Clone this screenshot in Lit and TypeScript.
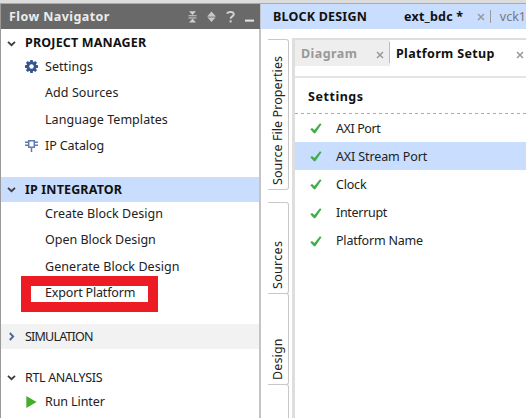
import { LitElement, html, css, svg } from "lit";
import { customElement } from "lit/decorators.js";
import { classMap } from "lit/directives/class-map.js";
import { styleMap } from "lit/directives/style-map.js";

const spaced = (label: string, ls: number) =>
  html`<span style=${styleMap({ letterSpacing: `${ls}px` })}>${label}</span>`;

const chevron = (open: boolean) => html`<svg class="chev" width="9" height="9" viewBox="0 0 9 9">
  <path d=${open ? "M1 2.8L4.5 6.2L8 2.8" : "M2.8 1L6.2 4.5L2.8 8"} fill="none"
    stroke=${open ? "#3c3c3c" : "#4a6494"} stroke-width="1.8"/></svg>`;

const gear = html`<svg width="13" height="13" viewBox="0 0 13 13">
  <g fill="#34558f">${[0, 45, 90, 135].map(a => svg`<rect x="5.1" y="0" width="2.8" height="13" rx=".4" transform="rotate(${a} 6.5 6.5)"/>`)}
  <circle cx="6.5" cy="6.5" r="5"/></g><circle cx="6.5" cy="6.5" r="2.2" fill="#fff"/></svg>`;

const chip = html`<svg width="13" height="14" viewBox="0 0 13 14">
  <path d="M3.7 1.7h5.6v6.6h-5.6zM0 3.2h3.5M0 6.2h3.5M9.5 3.2H13M9.5 6.2H13M6.5 8.5V13" fill="none" stroke="#5f7bb1" stroke-width="1.5"/></svg>`;

const play = html`<svg width="13" height="14" viewBox="0 0 13 14"><path d="M1.3 1v12L11.6 7z" fill="#43b02a"/></svg>`;

const check = html`<svg class="check" width="12" height="11" viewBox="0 0 12 11">
  <path d="M.3 6.2L2 4.9L4.4 7L10 .3L11.5 1.3L5.3 10.2H4z" fill="#3fae49"/></svg>`;

const item = (label: string, ls: number, icon: unknown = "") => html`
  <div class="item"><span class="ico">${icon}</span>${spaced(label, ls)}</div>`;

const settings: [string, number][] = [
  ["AXI Port", -0.4], ["AXI Stream Port", -0.12], ["Clock", -0.2], ["Interrupt", -0.3], ["Platform Name", -0.2],
];

@customElement("flow-navigator")
class FlowNavigator extends LitElement {
  static styles = css`
    :host { display: flex; flex-direction: column; box-sizing: border-box; width: 261px; height: 414px;
      border-left: 1px solid #999; border-right: 2px solid #c4c4c4; color: #222; }
    .head { height: 25px; flex: none; background: #696969; color: #ececec; display: flex; align-items: center;
      padding: 0 5px 0 8px; font-weight: 700; margin-right: -1px; }
    .head .title { flex: 1; }
    .sec { box-sizing: border-box; display: flex; align-items: center; height: 25px; flex: none; padding: 1px 0 0 6px; color: #222; }
    .sec.bold { font-weight: 700; color: #111; }
    .chev { margin-right: 9px; flex: none; }
    .sel { background: #c9ddff; }
    .dim { background: #f2f2f2; }
    .pm { margin-top: 1px; }
    .list { flex: none; margin: -1.4px 0 -.6px; }
    .item { display: flex; align-items: center; height: 26.4px; }
    .ico { width: 20px; padding-left: 24px; display: flex; flex: none; align-items: center; }
    .ip { margin-top: 18.4px; }
    .export { position: relative; }
    .mark { position: absolute; left: 20px; top: -4px; width: 117px; height: 16px; border: 10px solid #ed1c24; }
    .sim { margin-top: 18.4px; }
    .rtl { margin-top: 16px; }
  `;
  render() {
    return html`
      <div class="head"><span class="title">${spaced("Flow Navigator", 0.42)}</span>
        <svg width="68" height="16" viewBox="0 0 68 16" fill="none" stroke="#d0d0d0">
          <path d="M1.5 6.8h8M1.5 9h8" stroke-width="1.1"/><path d="M2 2.3h7L5.5 6zM2 13.5h7L5.5 9.8z" fill="#d0d0d0" stroke="none"/>
          <path d="M24.5 2.5L28.5 7H20.5zM24.5 13L28.5 8.5H20.5z" fill="#c8c8c8" stroke="none"/><path d="M20.5 7.7h8" stroke="#b4b4b4"/>
          <path d="M40 4.6C41 2.4 46.8 2.4 46.8 5.3C46.8 7.4 43.6 7.3 43.6 9.8M43.6 11.3v2.1" stroke-width="2"/>
          <path d="M58 11.6h9" stroke="#e4e4e4" stroke-width="2"/>
        </svg></div>
      <div class="sec bold pm">${chevron(true)}${spaced("PROJECT MANAGER", 0.17)}</div>
      <div class="list">${item("Settings", 0.05, gear)}${item("Add Sources", 0.07)}${item("Language Templates", 0.05)}${item("IP Catalog", -0.1, chip)}</div>
      <div class="sec bold sel ip">${chevron(true)}${spaced("IP INTEGRATOR", 0.15)}</div>
      <div class="list">${item("Create Block Design", 0.04)}${item("Open Block Design", -0.02)}${item("Generate Block Design", 0.06)}
        <div class="export">${item("Export Platform", -0.17)}<div class="mark"></div></div></div>
      <div class="sec dim sim">${chevron(false)}${spaced("SIMULATION", -0.8)}</div>
      <div class="sec rtl">${chevron(true)}${spaced("RTL ANALYSIS", -0.33)}</div>
      <div class="list">${item("Run Linter", -0.1, play)}</div>`;
  }
}

@customElement("block-design")
class BlockDesign extends LitElement {
  static styles = css`
    :host { display: flex; flex-direction: column; flex: 1; min-width: 0; height: 414px; overflow: hidden; }
    .head { height: 25px; flex: none; background: #c9ddff; display: flex; align-items: center; padding-left: 12px;
      font-weight: 700; color: #111; white-space: nowrap; }
    .head .file { margin-left: 37px; }
    .x { color: #999; flex: none; }
    .head .x { margin-left: 14px; }
    .head i { width: 1px; height: 13px; background: #999; margin: 0 9px 0 5px; }
    .head .other { font-weight: 400; color: #777; }
    .body { display: flex; flex: 1; min-height: 0; }
    .rail { width: 21px; padding: 10px 3px 0 7px; flex: none; }
    .vt { box-sizing: border-box; width: 21px; writing-mode: vertical-rl; transform: rotate(180deg); display: flex; align-items: center;
      color: #222; white-space: nowrap; border: 1px solid #c8c8c8; border-right: 0; border-radius: 3px 0 0 3px; padding-top: 4px; }
    .v1 { height: 151px; } .v2 { height: 92px; margin-top: 12px; } .v3 { height: 92px; margin-top: -1px; } .v4 { height: 60px; margin-top: -1px; }
    .pane { flex: 1; min-width: 0; margin-top: 9px; border-left: 3px solid #dedede; border-top: 2px solid #dedede; }
    .tabs { height: 36px; display: flex; border-bottom: 2px solid #e4e4e4; font-weight: 700; white-space: nowrap; }
    .tab { box-sizing: border-box; height: 26px; display: flex; align-items: center; color: #111; padding: 1px 0 0 6px; }
    .tab.off { width: 95px; background: linear-gradient(#bbb, #bbb) 94px 2px / 1px 21px no-repeat #eee; color: #999; }
    .off .x { margin-left: auto; margin-right: 6px; }
    .on .x { margin-left: 21px; }
    .x.low { margin-top: 3px; }
    .title { height: 35px; display: flex; align-items: center; padding: 2px 0 0 13px; box-sizing: border-box; font-weight: 700; color: #111; }
    .dash { height: 1px; background: repeating-linear-gradient(90deg, #aaa 0 3px, transparent 3px 6px); }
    .row { height: 28.2px; display: flex; align-items: center; padding: 1px 0 0 15px; box-sizing: border-box; color: #222; }
    .row.sel { background: #c9ddff; }
    .check { margin-right: 14px; }
  `;
  render() {
    const x = (low = false) => html`<svg class=${low ? "x low" : "x"} width="8" height="8" viewBox="0 0 8 8"><path d="M1 1l6 6M7 1L1 7" stroke="currentColor" stroke-width="1.5"/></svg>`;
    return html`
      <div class="head">${spaced("BLOCK DESIGN", 0.2)}<span class="file">${spaced("ext_bdc *", 0.22)}</span>${x()}<i></i><span class="other">${spaced("vck1", 0)}</span></div>
      <div class="body">
        <div class="rail"><div class="vt v1">${spaced("Source File Properties", 0.08)}</div><div class="vt v2">${spaced("Sources", 0.3)}</div><div class="vt v3">${spaced("Design", 0.15)}</div><div class="vt v4"></div></div>
        <div class="pane">
          <div class="tabs"><div class="tab off">${spaced("Diagram", 0.45)}${x(true)}</div><div class="tab on">${spaced("Platform Setup", 0.35)}${x(true)}</div></div>
          <div class="title">${spaced("Settings", 0.55)}</div><div class="dash"></div>
          ${settings.map(([t, ls], i) => html`<div class=${classMap({ row: true, sel: i === 1 })}>${check}${spaced(t, ls)}</div>`)}
        </div>
      </div>`;
  }
}

@customElement("app-root")
class AppRoot extends LitElement {
  static styles = css`
    :host { display: block; width: 526px; height: 418px; overflow: hidden; background: #fff; font: 12.5px/16px "Noto Sans", sans-serif; }
    .strip { height: 4px; box-sizing: border-box; background: #dcdcdc; border-bottom: 1px solid #aaa; }
    .main { display: flex; }
  `;
  render() {
    return html`<div class="strip"></div><div class="main"><flow-navigator></flow-navigator><block-design></block-design></div>`;
  }
}
